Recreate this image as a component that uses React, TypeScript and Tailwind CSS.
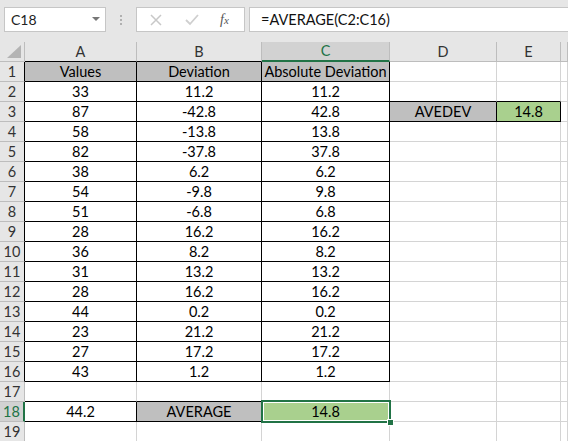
import React from 'react';

const cols = ['A', 'B', 'C', 'D', 'E', ''];
const colWidths = 'grid-cols-[25px_112px_125px_128px_107px_64px_1fr]';

const values = [33, 87, 58, 82, 38, 54, 51, 28, 36, 31, 28, 44, 23, 27, 43];
const deviations = ['11.2', '-42.8', '-13.8', '-37.8', '6.2', '-9.8', '-6.8', '16.2', '8.2', '13.2', '16.2', '0.2', '21.2', '17.2', '1.2'];

type Cell = { text?: string; bg?: string };

// sheet[row][col], rows 1..19, cols 1..6 (A..F)
const sheet: Record<number, Record<number, Cell>> = {
  1: {
    1: { text: 'Values', bg: 'bg-[#bfbfbf]' },
    2: { text: 'Deviation', bg: 'bg-[#bfbfbf]' },
    3: { text: 'Absolute Deviation', bg: 'bg-[#bfbfbf]' },
  },
  18: {
    1: { text: '44.2' },
    2: { text: 'AVERAGE', bg: 'bg-[#bfbfbf]' },
    3: { text: '14.8', bg: 'bg-[#a9d08e]' },
  },
};
values.forEach((v, i) => {
  const r = i + 2;
  sheet[r] = {
    1: { text: String(v) },
    2: { text: deviations[i] },
    3: { text: deviations[i].replace('-', '') },
  };
});
sheet[3][4] = { text: 'AVEDEV', bg: 'bg-[#bfbfbf]' };
sheet[3][5] = { text: '14.8', bg: 'bg-[#a9d08e]' };

const bordered = (r: number, c: number) => {
  if (r >= 1 && r <= 16 && c >= 1 && c <= 3) return true;
  if (r === 3 && (c === 4 || c === 5)) return true;
  if (r === 18 && c >= 1 && c <= 3) return true;
  return false;
};

const FormulaBar = () => (
  <div className="flex h-[42px] bg-[#e6e6e6] pt-[7px] pb-[10px] pl-[4px]">
    <div className="flex h-[25px] w-[102px] items-center justify-between border border-[#c6c6c6] bg-white pl-[6px] pr-[5px] text-[14px] text-[#222]">
      <span>C18</span>
      <svg width="8" height="5" viewBox="0 0 8 5">
        <path d="M0 0 L8 0 L4 4 Z" fill="#777" />
      </svg>
    </div>
    <div className="flex w-[30px] flex-col items-center justify-center gap-[2px]">
      <span className="h-[2px] w-[2px] bg-[#b0b0b0]" />
      <span className="h-[2px] w-[2px] bg-[#b0b0b0]" />
      <span className="h-[2px] w-[2px] bg-[#b0b0b0]" />
    </div>
    <div className="flex h-[25px] w-[109px] items-center border border-[#c6c6c6] bg-white">
      <svg className="ml-[13px]" width="12" height="12" viewBox="0 0 12 12">
        <path d="M1 1 L11 11 M11 1 L1 11" stroke="#c8c8c8" strokeWidth="1.5" />
      </svg>
      <svg className="ml-[23px]" width="14" height="12" viewBox="0 0 14 12">
        <path d="M1 6 L5 10 L13 1" stroke="#cfcfcf" strokeWidth="1.8" fill="none" />
      </svg>
      <span className="ml-[21px] font-['Liberation_Serif',serif] text-[14px] italic text-[#555]">
        f<span className="text-[11px]">x</span>
      </span>
    </div>
    <div className="ml-[4px] flex h-[25px] flex-1 items-center border border-r-0 border-[#c6c6c6] bg-white pl-[11px] text-[14.5px] text-[#111]">
      =AVERAGE(C2:C16)
    </div>
  </div>
);

const HeaderRow = () => (
  <>
    <div className="relative h-[20px] border-r border-b border-r-[#bdbdbd] border-b-[#bdbdbd] bg-[#e6e6e6]">
      <svg className="absolute right-[3px] bottom-[3px]" width="14" height="13" viewBox="0 0 14 13">
        <path d="M14 0 L14 13 L0 13 Z" fill="#b4b4b4" />
      </svg>
    </div>
    {cols.map((c, i) => {
      const colIdx = i + 1;
      const selected = c === 'C';
      return (
        <div
          key={i}
          className={`flex h-[20px] items-center justify-center border-r border-r-[#bdbdbd] text-[14.5px] ${
            selected
              ? 'border-b-2 border-b-[#217346] bg-[#d2d2d2] text-[#217346]'
              : bordered(1, colIdx)
                ? 'border-b border-b-black bg-[#e6e6e6] text-[#333]'
                : 'border-b border-b-[#bdbdbd] bg-[#e6e6e6] text-[#333]'
          }`}
        >
          {c}
        </div>
      );
    })}
  </>
);

const SheetRow = ({ r }: { r: number }) => {
  const selRow = r === 18;
  return (
    <>
      <div
        className={`flex h-[20px] items-center justify-center border-b border-b-[#bdbdbd] text-[14.5px] ${
          selRow
            ? 'border-r-2 border-r-[#217346] bg-[#d2d2d2] text-[#217346]'
            : bordered(r, 1)
              ? 'border-r border-r-black bg-[#e6e6e6] text-[#333]'
              : 'border-r border-r-[#bdbdbd] bg-[#e6e6e6] text-[#333]'
        }`}
      >
        {r}
      </div>
      {cols.map((_, i) => {
        const c = i + 1;
        const cell = sheet[r]?.[c] ?? {};
        const rightBlack = bordered(r, c) || bordered(r, c + 1);
        const bottomBlack = bordered(r, c) || bordered(r + 1, c);
        const isSel = r === 18 && c === 3;
        return (
          <div
            key={c}
            className={`relative flex h-[20px] items-center justify-center border-r border-b text-[14.5px] text-black ${
              rightBlack ? 'border-r-black' : 'border-r-[#d4d4d4]'
            } ${bottomBlack ? 'border-b-black' : 'border-b-[#d4d4d4]'} ${cell.bg ?? 'bg-white'} ${isSel ? 'z-10' : ''}`}
          >
            <span className="whitespace-nowrap">{cell.text ?? ''}</span>
            {isSel && (
              <>
                <div className="pointer-events-none absolute -top-[2px] -left-[1px] -right-[2px] -bottom-[2px] border-2 border-[#217346] shadow-[inset_0_0_0_1px_white]" />
                <div className="absolute -right-[5px] -bottom-[5px] h-[7px] w-[7px] border border-white bg-[#217346]" />
              </>
            )}
          </div>
        );
      })}
    </>
  );
};

export default function App() {
  const rows = Array.from({ length: 19 }, (_, i) => i + 1);
  return (
    <div className="h-[441px] w-[568px] overflow-hidden bg-white font-['Lato','Noto_Sans',sans-serif]">
      <FormulaBar />
      <div className={`grid ${colWidths}`}>
        <HeaderRow />
        {rows.map((r) => (
          <SheetRow key={r} r={r} />
        ))}
      </div>
    </div>
  );
}
